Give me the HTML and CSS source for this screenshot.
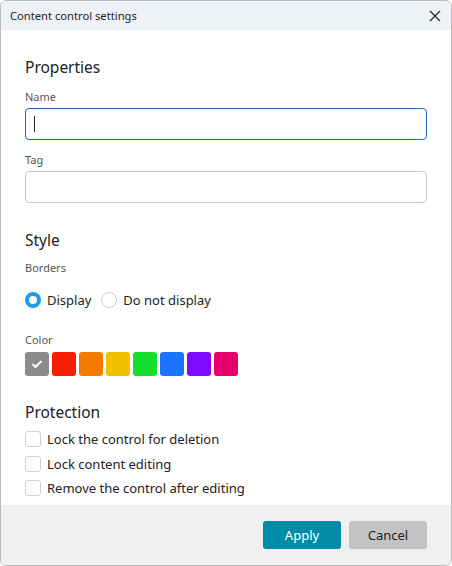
FILE: index.html
```html
<!DOCTYPE html>
<html lang="en">
<head>
  <meta charset="UTF-8">
  <meta name="viewport" content="width=device-width, initial-scale=1.0">
  <title>Content control settings</title>
  <link rel="stylesheet" href="styles.css">
</head>
<body>
  <div class="dialog">
    <div class="titlebar">
      <span class="title">Content control settings</span>
      <svg class="close" width="12" height="12" viewBox="0 0 12 12">
        <path d="M1 1 L11 11 M11 1 L1 11" stroke="#222" stroke-width="1.2" fill="none"/>
      </svg>
    </div>

    <div class="content">
      <h3 class="section-title">Properties</h3>
      <label class="field-label first" for="name">Name</label>
      <div class="input focused"><span class="caret"></span></div>
      <label class="field-label" for="tag">Tag</label>
      <div class="input"></div>

      <h3 class="section-title style-title">Style</h3>
      <div class="field-label borders-label">Borders</div>
      <div class="radios">
        <div class="radio-item"><span class="radio checked"></span>Display</div>
        <div class="radio-item"><span class="radio"></span>Do not display</div>
      </div>

      <div class="field-label color-label">Color</div>
      <div class="swatches">
        <span class="swatch sel" style="background:#8c8c8c">
          <svg width="12" height="10" viewBox="0 0 12 10"><path d="M1.5 5 L4.5 8 L10.5 2" stroke="#fff" stroke-width="2" fill="none"/></svg>
        </span>
        <span class="swatch" style="background:#f81f05"></span>
        <span class="swatch" style="background:#f77a00"></span>
        <span class="swatch" style="background:#f2c100"></span>
        <span class="swatch" style="background:#12e02c"></span>
        <span class="swatch" style="background:#1a73ff"></span>
        <span class="swatch" style="background:#8109ff"></span>
        <span class="swatch" style="background:#e5006d"></span>
      </div>

      <h3 class="section-title prot-title">Protection</h3>
      <div class="checks">
        <div class="check-item"><span class="checkbox"></span>Lock the control for deletion</div>
        <div class="check-item"><span class="checkbox"></span>Lock content editing</div>
        <div class="check-item"><span class="checkbox"></span>Remove the control after editing</div>
      </div>
    </div>

    <div class="footer">
      <button class="btn primary">Apply</button>
      <button class="btn">Cancel</button>
    </div>
  </div>
</body>
</html>
```

FILE: styles.css
```css
html, body {
  margin: 0;
  padding: 0;
  height: 100%;
}
body {
  font-family: "Noto Sans", "Open Sans", Arial, sans-serif;
  background: #fff;
  color: #222;
}
.dialog {
  box-sizing: border-box;
  width: 452px;
  height: 566px;
  border: 1px solid #b9b9b9;
  border-radius: 6px;
  overflow: hidden;
  display: flex;
  flex-direction: column;
  background: #fff;
}
.titlebar {
  height: 29px;
  background: #eef2f6;
  display: flex;
  align-items: center;
  justify-content: space-between;
  padding: 0 10px 0 9px;
  flex-shrink: 0;
}
.title {
  font-size: 11.2px;
  color: #222;
}
.content {
  flex: 1;
  padding: 25px 24px 0 24px;
}
.section-title {
  margin: 0;
  font-size: 15.5px;
  font-weight: normal;
  color: #222;
  line-height: 24px;
}
.field-label {
  display: block;
  font-size: 11px;
  color: #555;
  margin-top: 12px;
  line-height: 16px;
}
.field-label.first {
  margin-top: 10px;
}
.input {
  box-sizing: border-box;
  height: 32px;
  border: 1px solid #c8c8c8;
  border-radius: 4px;
  margin-top: 3px;
  display: flex;
  align-items: center;
  padding-left: 8px;
}
.input.focused {
  border-color: #2069ad;
}
.caret {
  width: 1px;
  height: 16px;
  background: #222;
}
.style-title {
  margin-top: 25px;
}
.borders-label {
  margin-top: 8px;
}
.radios {
  display: flex;
  gap: 10px;
  margin-top: 15px;
  font-size: 13px;
}
.radio-item {
  display: flex;
  align-items: center;
  gap: 6px;
  height: 18px;
}
.radio {
  box-sizing: border-box;
  width: 16px;
  height: 16px;
  border-radius: 50%;
  border: 1px solid #cfcfcf;
  background: #fff;
}
.radio.checked {
  border: 4px solid #1e9be9;
}
.color-label {
  margin-top: 23px;
}
.swatches {
  display: flex;
  gap: 3px;
  margin-top: 4px;
}
.swatch {
  width: 24px;
  height: 24px;
  border-radius: 3px;
  display: flex;
  align-items: center;
  justify-content: center;
}
.prot-title {
  margin-top: 24px;
}
.checks {
  display: flex;
  flex-direction: column;
  gap: 6.5px;
  margin-top: 6px;
  font-size: 13px;
}
.check-item {
  display: flex;
  align-items: center;
  gap: 6px;
  height: 18px;
}
.checkbox {
  box-sizing: border-box;
  width: 16px;
  height: 16px;
  border: 1px solid #cfcfcf;
  border-radius: 3px;
  background: #fff;
}
.footer {
  height: 60px;
  background: #f0f0f0;
  display: flex;
  justify-content: flex-end;
  align-items: center;
  gap: 8px;
  padding: 0 24px 0 0;
  flex-shrink: 0;
}
.btn {
  width: 78px;
  height: 28px;
  border: none;
  border-radius: 3px;
  background: #c3c3c3;
  color: #222;
  font-family: inherit;
  font-size: 13px;
  padding: 0;
}
.btn.primary {
  background: #008ca6;
  color: #fff;
}
```
